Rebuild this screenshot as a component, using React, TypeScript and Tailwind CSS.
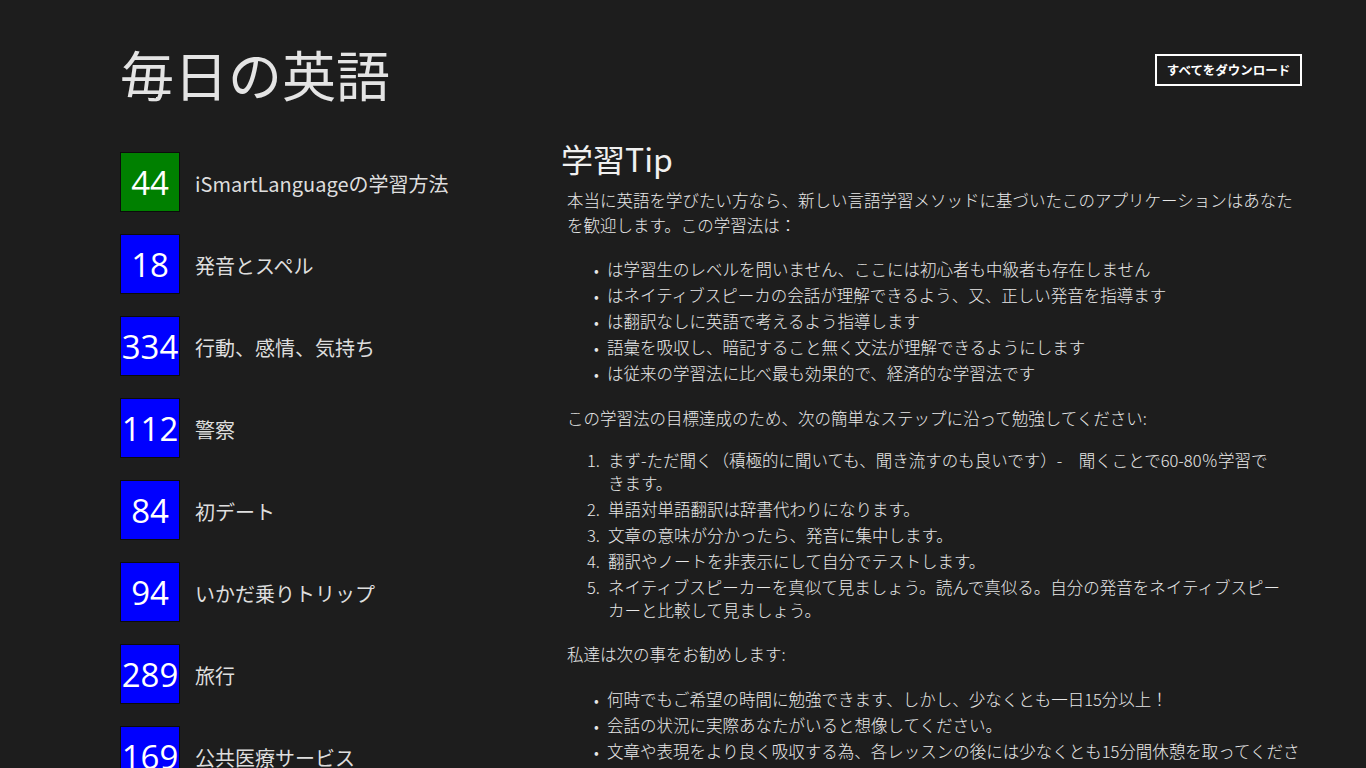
import React from "react";

const FONT = '"Noto Sans CJK JP", "Noto Sans", sans-serif';

interface Lesson {
  count: number;
  title: string;
  done?: boolean;
}

const LESSONS: Lesson[] = [
  { count: 44, title: "iSmartLanguageの学習方法", done: true },
  { count: 18, title: "発音とスペル" },
  { count: 334, title: "行動、感情、気持ち" },
  { count: 112, title: "警察" },
  { count: 84, title: "初デート" },
  { count: 94, title: "いかだ乗りトリップ" },
  { count: 289, title: "旅行" },
  { count: 169, title: "公共医療サービス" },
];

const FEATURES = [
  "は学習生のレベルを問いません、ここには初心者も中級者も存在しません",
  "はネイティブスピーカの会話が理解できるよう、又、正しい発音を指導ます",
  "は翻訳なしに英語で考えるよう指導します",
  "語彙を吸収し、暗記すること無く文法が理解できるようにします",
  "は従来の学習法に比べ最も効果的で、経済的な学習法です",
];

// first step is broken by hand, the original font sets it wider
const STEPS = [
  "まず-ただ聞く（積極的に聞いても、聞き流すのも良いです）-　聞くことで60-80％学習で\nきます。",
  "単語対単語翻訳は辞書代わりになります。",
  "文章の意味が分かったら、発音に集中します。",
  "翻訳やノートを非表示にして自分でテストします。",
  "ネイティブスピーカーを真似て見ましょう。読んで真似る。自分の発音をネイティブスピーカーと比較して見ましょう。",
];

const ADVICE = [
  "何時でもご希望の時間に勉強できます、しかし、少なくとも一日15分以上！",
  "会話の状況に実際あなたがいると想像してください。",
  "文章や表現をより良く吸収する為、各レッスンの後には少なくとも15分間休憩を取ってください。",
];

function Bullets({ items }: { items: string[] }) {
  return (
    <ul className="pl-[27px]">
      {items.map((t) => (
        <li key={t} className="flex leading-[23px] mb-[3px]">
          <span className="w-[13px] shrink-0 text-[15px]">•</span>
          <span className="[line-break:strict]">{t}</span>
        </li>
      ))}
    </ul>
  );
}

export default function App() {
  return (
    <div
      className="h-[768px] overflow-hidden bg-[#1d1d1d] text-[#e8e8e8] pl-[120px] pr-[64px]"
      style={{ fontFamily: FONT }}
    >
      <header className="flex items-start justify-between">
        <h1 className="pt-[42px] text-[54px] leading-[64px] font-normal text-[#e4e4e4]">
          毎日の英語
        </h1>
        <button className="mt-[54px] h-[32px] w-[147px] border-2 border-white text-[12.5px] font-bold text-white">
          すべてをダウンロード
        </button>
      </header>

      <div className="flex mt-[34px]">
        <ul className="w-[441px] shrink-0 pt-[12px] flex flex-col gap-[22px]">
          {LESSONS.map((l) => (
            <li key={l.count} className="flex items-center gap-[15px]">
              <div
                className={`w-[60px] h-[60px] shrink-0 flex items-center justify-center border border-[#0c0c0c] text-white text-[33px] leading-none ${
                  l.done ? "bg-[#008000]" : "bg-[#0000ff]"
                }`}
                style={{ fontFamily: '"Open Sans", sans-serif' }}
              >
                {l.count}
              </div>
              <span className="pt-[4px] text-[20px] text-[#dedede]">{l.title}</span>
            </li>
          ))}
        </ul>

        <section className="w-[757px] text-[16.5px] font-light">
          <h2 className="text-[32px] leading-[36px] font-normal text-[#f0f0f0]">学習Tip</h2>
          <div className="pl-[6px] mt-[12px]">
            <p className="leading-[25px] w-[735px]">
              本当に英語を学びたい方なら、新しい言語学習メソッドに基づいたこのアプリケーションはあなたを歓迎します。この学習法は：
            </p>
            <div className="mt-[20px]">
              <Bullets items={FEATURES} />
            </div>
            <p className="leading-[25px] mt-[21px]">
              この学習法の目標達成のため、次の簡単なステップに沿って勉強してください:
            </p>
            <ol className="pl-[20px] mt-[18px] w-[720px]">
              {STEPS.map((t, i) => (
                <li key={t} className="flex leading-[23px] mb-[3px]">
                  <span className="w-[21px] shrink-0">{i + 1}.</span>
                  <span className="whitespace-pre-line [line-break:strict]">{t}</span>
                </li>
              ))}
            </ol>
            <p className="leading-[25px] mt-[20px]">私達は次の事をお勧めします:</p>
            <div className="mt-[21px]">
              <Bullets items={ADVICE} />
            </div>
          </div>
        </section>
      </div>
    </div>
  );
}
